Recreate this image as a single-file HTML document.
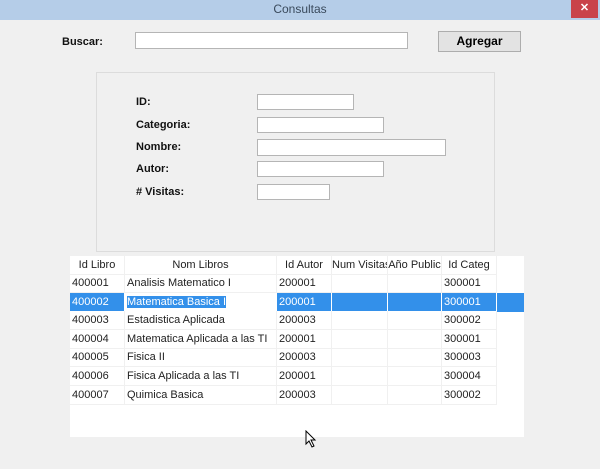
<!DOCTYPE html><html><head><style>
*{margin:0;padding:0;box-sizing:border-box}
body{width:600px;height:469px;background:#f0f0f0;font-family:"Liberation Sans",sans-serif;position:relative;overflow:hidden}
.a{position:absolute}
.tb{left:0;top:0;width:600px;height:20px;background:#b5cde8;text-align:center;font-size:12px;color:#3a4a5c;line-height:19px}
.x{left:571px;top:0;width:27px;height:18px;background:#c9434a;color:#fff;font-size:11px;text-align:center;line-height:17px;font-weight:bold}
.lb{font-weight:bold;font-size:11px;color:#111}
.in{background:#fff;border:1px solid #b5b5b5}
.grid{left:70px;top:256px;width:454px;height:181px;background:#fff;font-family:"Liberation Sans",sans-serif;font-size:11px;color:#222}
.c{position:absolute;height:19px;line-height:18px;border-right:1px solid #f0f0f0;border-bottom:1px solid #f0f0f0;white-space:nowrap;overflow:hidden;padding-left:2px}
</style></head><body>
<div class="a tb">Consultas</div>
<div class="a x">✕</div>
<div class="a lb" style="left:62px;top:36px">Buscar:</div>
<div class="a in" style="left:135px;top:32px;width:273px;height:17px"></div>
<div class="a" style="left:438px;top:31px;width:83px;height:21px;border:1px solid #adadad;background:#e3e3e3;font-weight:bold;font-size:12px;text-align:center;line-height:19px">Agregar</div>
<div class="a" style="left:96px;top:72px;width:399px;height:180px;border:1px solid #dcdcdc"></div>
<div class="a lb" style="left:136px;top:96px">ID:</div>
<div class="a lb" style="left:136px;top:119px">Categoria:</div>
<div class="a lb" style="left:136px;top:141px">Nombre:</div>
<div class="a lb" style="left:136px;top:163px">Autor:</div>
<div class="a lb" style="left:136px;top:186px"># Visitas:</div>
<div class="a in" style="left:257px;top:94px;width:97px;height:16px"></div>
<div class="a in" style="left:257px;top:117px;width:127px;height:16px"></div>
<div class="a in" style="left:257px;top:139px;width:189px;height:17px"></div>
<div class="a in" style="left:257px;top:161px;width:127px;height:16px"></div>
<div class="a in" style="left:257px;top:184px;width:73px;height:16px"></div>
<div class="a grid" id="g"></div>
<script>
var cols=[0,55,207,262,318,372,427],g=document.getElementById('g');
var hd=["Id Libro","Nom Libros","Id Autor","Num Visitas","Año Public","Id Categ"];
var rows=[["400001","Analisis Matematico I","200001","300001"],["400002","Matematica Basica I","200001","300001"],["400003","Estadistica Aplicada","200003","300002"],["400004","Matematica Aplicada a las TI","200001","300001"],["400005","Fisica II","200003","300003"],["400006","Fisica Aplicada a las TI","200001","300004"],["400007","Quimica Basica","200003","300002"]];
var h='';
for(var i=0;i<6;i++)h+='<div class="c" style="left:'+cols[i]+'px;top:0;width:'+(cols[i+1]-cols[i])+'px;text-align:center;padding:0">'+hd[i]+'</div>';
rows.forEach(function(r,j){var t=18+j*18.6,v=[r[0],r[1],r[2],"","",r[3]];
if(j==1)h+='<div style="position:absolute;left:0;top:'+t+'px;width:454px;height:19px;background:#3390ea"></div>';
for(var i=0;i<6;i++){var st='left:'+cols[i]+'px;top:'+t+'px;width:'+(cols[i+1]-cols[i])+'px;';
if(j==1){st+='color:#fff;border-color:#fff;';if(i==1)st+='background:#fff;color:#fff;';}
var txt=v[i];if(j==1&&i==1)txt='<span style="background:#3390ea;color:#fff">'+txt+'</span>';
h+='<div class="c" style="'+st+'">'+txt+'</div>';}});
g.innerHTML=h;
</script>
<svg class="a" style="left:305px;top:430px" width="12" height="18"><path d="M1 1 L1 14 L4 11 L7 17 L9 16 L6 10 L10 10 Z" fill="#fff" stroke="#000" stroke-width="1"/></svg>
</body></html>
